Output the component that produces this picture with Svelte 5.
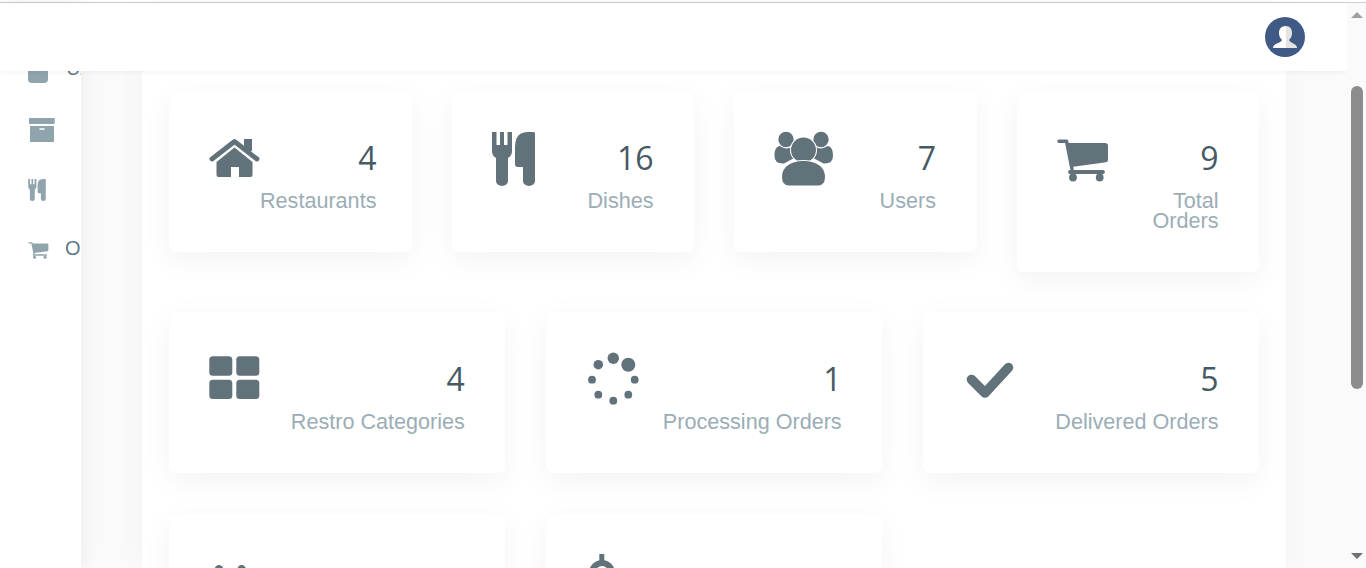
<script>
  const rows = [
    [
      { icon: "home", value: "4", label: "Restaurants" },
      { icon: "cutlery", value: "16", label: "Dishes" },
      { icon: "users", value: "7", label: "Users" },
      { icon: "cart", value: "9", label: "Total Orders" },
    ],
    [
      { icon: "grid", value: "4", label: "Restro Categories" },
      { icon: "spinner", value: "1", label: "Processing Orders" },
      { icon: "check", value: "5", label: "Delivered Orders" },
    ],
    [{ icon: "ban" }, { icon: "dollar" }],
  ];

  const spinnerDots = [
    [27.3, 6.3, 5.7],
    [42.3, 12.7, 7],
    [48.7, 27.7, 3.9],
    [42.3, 42.7, 3.9],
    [27.3, 48.7, 3.9],
    [12.3, 42.7, 3.9],
    [6, 27.7, 3.9],
    [12.3, 12.7, 4.8],
  ];
</script>

{#snippet cutlery()}
  <path d="M0 0H4.5V13H8V0H12V13H15.5V0H20V19Q20 24 16 26V49A6 5 0 0 1 4 49V26Q0 24 0 19Z" />
  <path d="M43 1V49A6 5 0 0 1 31 49V35H26Q23 35 23 32V15Q23 0 36 0H41Q43 0 43 1Z" />
{/snippet}

{#snippet cart()}
  <path class="line" stroke-width="3.5" d="M2 2.2H9.5L15 30" />
  <path d="M10 4H48Q51 4 51 7V21Q51 23 49 23.3L14.5 28Z" />
  <path class="line" stroke-width="3.8" d="M13 33H46" />
  <circle cx="16" cy="38.5" r="3.9" />
  <circle cx="42.7" cy="38.5" r="3.9" />
{/snippet}

{#snippet icon(name)}
  <svg class="glyph" viewBox="0 0 60 60" width="60" height="60">
    {#if name === "home"}
      <g transform="translate(1 8)">
        <rect x="34" y="0" width="8" height="12" />
        <path class="line" stroke-width="4.8" d="M2 20L24.5 2.5L47 20" />
        <path d="M6.5 23L24.5 8.5L42.5 23V36Q42.5 38 40.5 38H29V28H21V38H8.5Q6.5 38 6.5 36Z" />
      </g>
    {:else if name === "cutlery"}
      <g transform="translate(0 1)">{@render cutlery()}</g>
    {:else if name === "users"}
      <g transform="translate(0 1)">
        <circle cx="12" cy="7.5" r="7.7" />
        <circle cx="47" cy="7.5" r="7.7" />
        <path d="M0.5 24C0.5 18 2 14.5 6 14C10 17 14 17 18 15L24 24L10 31.5Q0.5 32 0.5 24Z" />
        <path d="M59 24C59 18 57.5 14.5 53.5 14C49.5 17 45.5 17 41.5 15L35.5 24L49.5 31.5Q59 32 59 24Z" />
        <circle class="cut" cx="29.5" cy="18" r="12.5" />
        <path class="cut" d="M8 45C8 34 18 29 29.5 29C41 29 51 34 51 45Q51 53.5 44 53.5H15Q8 53.5 8 45Z" />
      </g>
    {:else if name === "cart"}
      <g transform="translate(0 8)">{@render cart()}</g>
    {:else if name === "grid"}
      <g transform="translate(0 4)">
        <rect x="0.3" y="0.3" width="23" height="19.4" rx="3.5" />
        <rect x="27.3" y="0.3" width="23" height="19.4" rx="3.5" />
        <rect x="0.3" y="23.7" width="23" height="19.4" rx="3.5" />
        <rect x="27.3" y="23.7" width="23" height="19.4" rx="3.5" />
      </g>
    {:else if name === "spinner"}
      <g>
        {#each spinnerDots as d}
          <circle cx={d[0]} cy={d[1]} r={d[2]} />
        {/each}
      </g>
    {:else if name === "check"}
      <g transform="translate(3 10)">
        <path class="line" stroke-width="9.6" d="M5.5 17.5L19 31L42.5 5.5" />
      </g>
    {:else if name === "ban"}
      <circle cx="10" cy="15.2" r="4.2" />
      <circle cx="32.6" cy="15.2" r="4.2" />
    {:else if name === "dollar"}
      <rect x="13.3" y="0" width="5" height="8" />
      <circle class="ring" cx="16" cy="19" r="10" />
    {/if}
  </svg>
{/snippet}

<div class="page">
  <div class="chrome"></div>
  <div class="window">
    <header class="topbar">
      <div class="avatar">
        <svg viewBox="0 0 40 40" width="40" height="40">
          <circle cx="20" cy="20" r="20" fill="#415a85" />
          <path fill="#fff" d="M21 9C16 9 14 12 14 16C14 19 15 21 17 23C16 25 14 25.5 11 27C9 28 8 29 8 31H21Z" />
          <path fill="#e4e4e4" d="M21 9C25 9 27 12 27 16C27 19 26 21 24 23C25 25 27 25.5 29 27C31 28 32 29 32 31H21Z" />
        </svg>
      </div>
    </header>

    <aside class="sidebar">
      <nav>
        <div class="nav-row">
          <svg class="nav-icon" viewBox="0 0 28 24" width="28" height="24">
            <rect x="0" y="0" width="20" height="21" rx="4" />
          </svg>
          <span class="nav-text clipped">U.</span>
        </div>
        <div class="nav-row">
          <svg class="nav-icon" viewBox="0 0 28 24" width="28" height="24">
            <rect x="1" y="0" width="25.7" height="6" />
            <path fill-rule="evenodd" d="M2 8H26V24H2ZM11.5 10.3V11.8H16.5V10.3Z" />
          </svg>
        </div>
        <div class="nav-row">
          <svg class="nav-icon" viewBox="0 0 43 54" width="18" height="22">
            {@render cutlery()}
          </svg>
        </div>
        <div class="nav-row">
          <svg class="nav-icon" viewBox="0 0 52 43" width="21" height="17">
            {@render cart()}
          </svg>
          <span class="nav-text">O</span>
        </div>
      </nav>
    </aside>

    <main class="gutter">
      <section class="panel">
        {#each rows as row, i}
          <div class="row" class:four={i === 0}>
            {#each row as card}
              <article class="card">
                <div class="card-icon">{@render icon(card.icon)}</div>
                {#if card.label}
                  <div class="card-text">
                    <div class="value">{card.value}</div>
                    <div class="label">{card.label}</div>
                  </div>
                {/if}
              </article>
            {/each}
          </div>
        {/each}
      </section>
    </main>

    <div class="scrollbar">
      <span class="arrow up"></span>
      <span class="thumb"></span>
      <span class="arrow down"></span>
    </div>
  </div>
</div>

<style>
  :global(body) {
    background: #fff;
  }
  .page {
    height: 568px;
    overflow: hidden;
    font-family: "Liberation Sans", Arial, sans-serif;
  }
  .chrome {
    height: 2px;
    background: #fff;
    border-bottom: 1px solid #cfcfcf;
  }
  .window {
    position: relative;
    display: flex;
    height: 565px;
  }
  .topbar {
    position: absolute;
    top: 0;
    left: 0;
    right: 19px;
    height: 68px;
    z-index: 5;
    display: flex;
    align-items: center;
    justify-content: flex-end;
    padding-right: 42px;
    background: #fff;
    box-shadow: 0 1px 6px rgba(0, 0, 0, 0.05);
  }
  .avatar {
    width: 40px;
    height: 40px;
  }
  .avatar svg {
    display: block;
  }
  .sidebar {
    flex: none;
    width: 81px;
    overflow: hidden;
    background: #fff;
    z-index: 2;
    box-shadow: 0 0 20px rgba(0, 0, 0, 0.07);
  }
  nav {
    margin-top: 37px;
  }
  .nav-row {
    display: flex;
    align-items: center;
    height: 60px;
    padding-left: 28px;
    white-space: nowrap;
  }
  .nav-icon {
    flex: none;
    fill: #90a4ae;
  }
  .nav-icon .line,
  .glyph .line {
    fill: none;
    stroke-linecap: round;
    stroke-linejoin: round;
  }
  .nav-icon .line {
    stroke: #90a4ae;
  }
  .nav-text {
    margin-top: -4px;
    font-size: 20px;
    color: #5f7a87;
  }
  .clipped {
    letter-spacing: -1.5px;
  }
  .nav-row:first-child .nav-icon {
    margin-top: 8px;
    margin-right: 10px;
  }
  .nav-row:last-child .nav-icon {
    margin-right: 16px;
  }
  .gutter {
    flex: 1;
    min-width: 0;
    padding: 0 61px;
    background: #fafafa;
  }
  .panel {
    height: 100%;
    box-sizing: border-box;
    padding: 88px 27px 0;
    background: #fff;
    box-shadow: 0 0 30px rgba(0, 0, 0, 0.03);
    overflow: hidden;
  }
  .row {
    display: grid;
    grid-template-columns: repeat(3, minmax(0, 1fr));
    align-items: start;
    gap: 40.5px;
    margin-bottom: 40.5px;
  }
  .row.four {
    grid-template-columns: repeat(4, minmax(0, 1fr));
    gap: 40px;
    margin-bottom: 40px;
  }
  .card {
    display: flex;
    box-sizing: border-box;
    min-height: 161px;
    padding: 40px 40.5px 40px 40px;
    background: #fff;
    border-radius: 7px;
    box-shadow: 0 8px 30px rgba(0, 0, 0, 0.05);
  }
  .card-icon {
    flex: none;
    width: 51px;
    height: 60px;
  }
  .glyph {
    display: block;
    overflow: visible;
    fill: #62727b;
  }
  .glyph .line {
    stroke: #62727b;
  }
  .glyph .cut {
    stroke: #fff;
    stroke-width: 2;
    paint-order: stroke;
  }
  .glyph .ring {
    fill: none;
    stroke: #62727b;
    stroke-width: 6;
  }
  .card-text {
    flex: 1;
    text-align: right;
  }
  .value {
    padding-top: 3px;
    font-family: "Open Sans", sans-serif;
    font-size: 32px;
    line-height: 48px;
    color: #455a64;
  }
  .label {
    margin-top: 9px;
    padding-bottom: 1px;
    font-size: 21.6px;
    line-height: 20px;
    color: #9badb6;
  }
  .scrollbar {
    position: relative;
    flex: none;
    width: 19px;
    background: #fafafa;
    z-index: 6;
  }
  .thumb {
    position: absolute;
    top: 83px;
    left: 4px;
    width: 12px;
    height: 303px;
    border-radius: 6px;
    background: #8c8c8c;
  }
  .arrow {
    position: absolute;
    left: 4px;
    width: 0;
    height: 0;
    border-left: 6px solid transparent;
    border-right: 6px solid transparent;
  }
  .up {
    top: 9px;
    border-bottom: 6px solid #a0a0a0;
  }
  .down {
    top: 550px;
    border-top: 6px solid #707070;
  }
</style>
